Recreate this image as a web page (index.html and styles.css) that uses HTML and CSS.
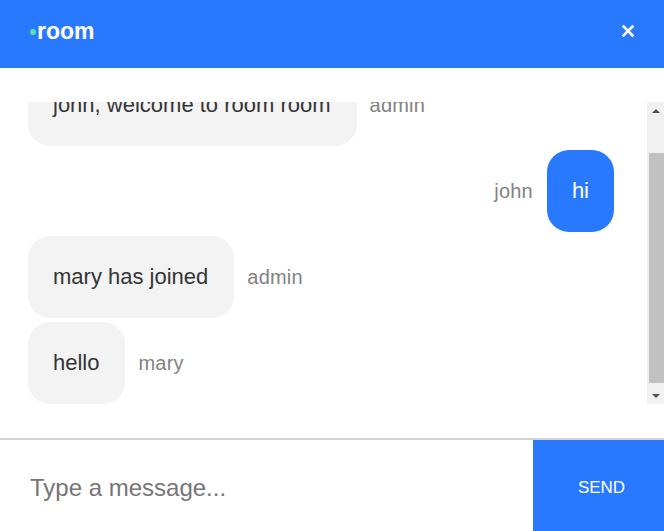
FILE: index.html
```html
<!DOCTYPE html>
<html lang="en">
<head>
<meta charset="utf-8">
<title>room</title>
<link rel="stylesheet" href="styles.css">
</head>
<body>
<div class="chat">
  <header class="info-bar">
    <div class="room">
      <span class="online-dot"></span>
      <h3 class="room-name">room</h3>
    </div>
    <a class="close" href="#" aria-label="close">
      <svg width="12" height="12" viewBox="0 0 12 12"><path d="M1.5 1.5 L10.5 10.5 M10.5 1.5 L1.5 10.5" stroke="#fff" stroke-width="2.6" stroke-linecap="square"/></svg>
    </a>
  </header>
  <div class="messages">
    <div class="scroller">
      <div class="list">
        <div class="row start">
          <div class="bubble light"><p class="text">john, welcome to room room</p></div>
          <p class="sender pl">admin</p>
        </div>
        <div class="row end">
          <p class="sender pr">john</p>
          <div class="bubble blue"><p class="text">hi</p></div>
        </div>
        <div class="row start">
          <div class="bubble light"><p class="text">mary has joined</p></div>
          <p class="sender pl">admin</p>
        </div>
        <div class="row start">
          <div class="bubble light"><p class="text">hello</p></div>
          <p class="sender pl">mary</p>
        </div>
      </div>
      <div class="scrollbar">
        <div class="sb-btn"><span class="arrow up"></span></div>
        <div class="sb-track"><div class="sb-thumb"></div></div>
        <div class="sb-btn"><span class="arrow down"></span></div>
      </div>
    </div>
  </div>
  <form class="form">
    <input class="input" type="text" placeholder="Type a message...">
    <button class="send" type="button">Send</button>
  </form>
</div>
</body>
</html>
```

FILE: styles.css
```css
html, body {
  margin: 0;
  padding: 0;
  background: #ffffff;
  font-family: "Liberation Sans", Arial, sans-serif;
}

.chat {
  display: flex;
  flex-direction: column;
  width: 664px;
  height: 531px;
  background: #ffffff;
}

.info-bar {
  height: 68px;
  flex: none;
  background: #2979FF;
  display: flex;
  align-items: center;
  justify-content: space-between;
  padding: 0 30px 6px 30px;
  box-sizing: border-box;
}

.room {
  display: flex;
  align-items: center;
  color: #ffffff;
}

.online-dot {
  width: 6px;
  height: 6px;
  border-radius: 50%;
  background: #55e3a9;
  margin-right: 1px;
  margin-top: 1px;
}

.room-name {
  margin: 0;
  font-size: 23px;
  font-weight: bold;
  line-height: 26px;
}

.close {
  display: flex;
  align-items: center;
  justify-content: center;
  width: 12px;
  height: 12px;
  margin-right: 0px;
}

.messages {
  flex: 1;
  padding: 34px 0 34px 0;
  display: flex;
  flex-direction: column;
  min-height: 0;
}

.scroller {
  flex: 1;
  display: flex;
  min-height: 0;
}

.list {
  flex: 1;
  display: flex;
  flex-direction: column;
  justify-content: flex-end;
  overflow: hidden;
}

.row {
  display: flex;
  align-items: center;
  padding: 0 33px 0 28px;
  margin-top: 4px;
  flex: none;
}

.row.end {
  justify-content: flex-end;
}

.bubble {
  border-radius: 22px;
  padding: 30px 25px 30px 25px;
  display: inline-block;
}

.bubble.light {
  background: #F3F3F3;
  color: #353535;
  padding-right: 26px;
}

.bubble.blue {
  background: #2979FF;
  color: #ffffff;
}

.text {
  margin: 0;
  font-size: 22px;
  line-height: 22px;
  white-space: nowrap;
}

.sender {
  margin: 0;
  font-size: 20px;
  line-height: 22px;
  color: #828282;
  letter-spacing: 0.2px;
}

.sender.pl {
  padding-left: 13px;
}

.sender.pr {
  padding-right: 14px;
}

.scrollbar {
  width: 17px;
  flex: none;
  background: #F1F1F1;
  display: flex;
  flex-direction: column;
}

.sb-btn {
  height: 17px;
  flex: none;
  display: flex;
  align-items: center;
  justify-content: center;
}

.arrow {
  width: 0;
  height: 0;
  border-left: 4px solid transparent;
  border-right: 4px solid transparent;
}

.arrow.up {
  border-bottom: 4px solid #505050;
}

.arrow.down {
  border-top: 4px solid #505050;
}

.sb-track {
  flex: 1;
}

.sb-thumb {
  margin-top: 34px;
  margin-left: 2px;
  height: 230px;
  background: #C1C1C1;
}

.form {
  flex: none;
  display: flex;
  border-top: 2px solid #D3D3D3;
  height: 93px;
  box-sizing: border-box;
  margin: 0;
}

.input {
  flex: 1;
  border: none;
  outline: none;
  padding: 5px 0 0 30px;
  margin: 0;
  font-family: "Liberation Sans", Arial, sans-serif;
  font-size: 24px;
  color: #353535;
  background: #ffffff;
  min-width: 0;
}

.input::placeholder {
  color: #757575;
}

.send {
  width: 131px;
  flex: none;
  border: none;
  margin: 0;
  background: #2979FF;
  color: #ffffff;
  text-transform: uppercase;
  font-family: "Liberation Sans", Arial, sans-serif;
  font-size: 17px;
  padding: 4px 0 0 6px;
}
```
